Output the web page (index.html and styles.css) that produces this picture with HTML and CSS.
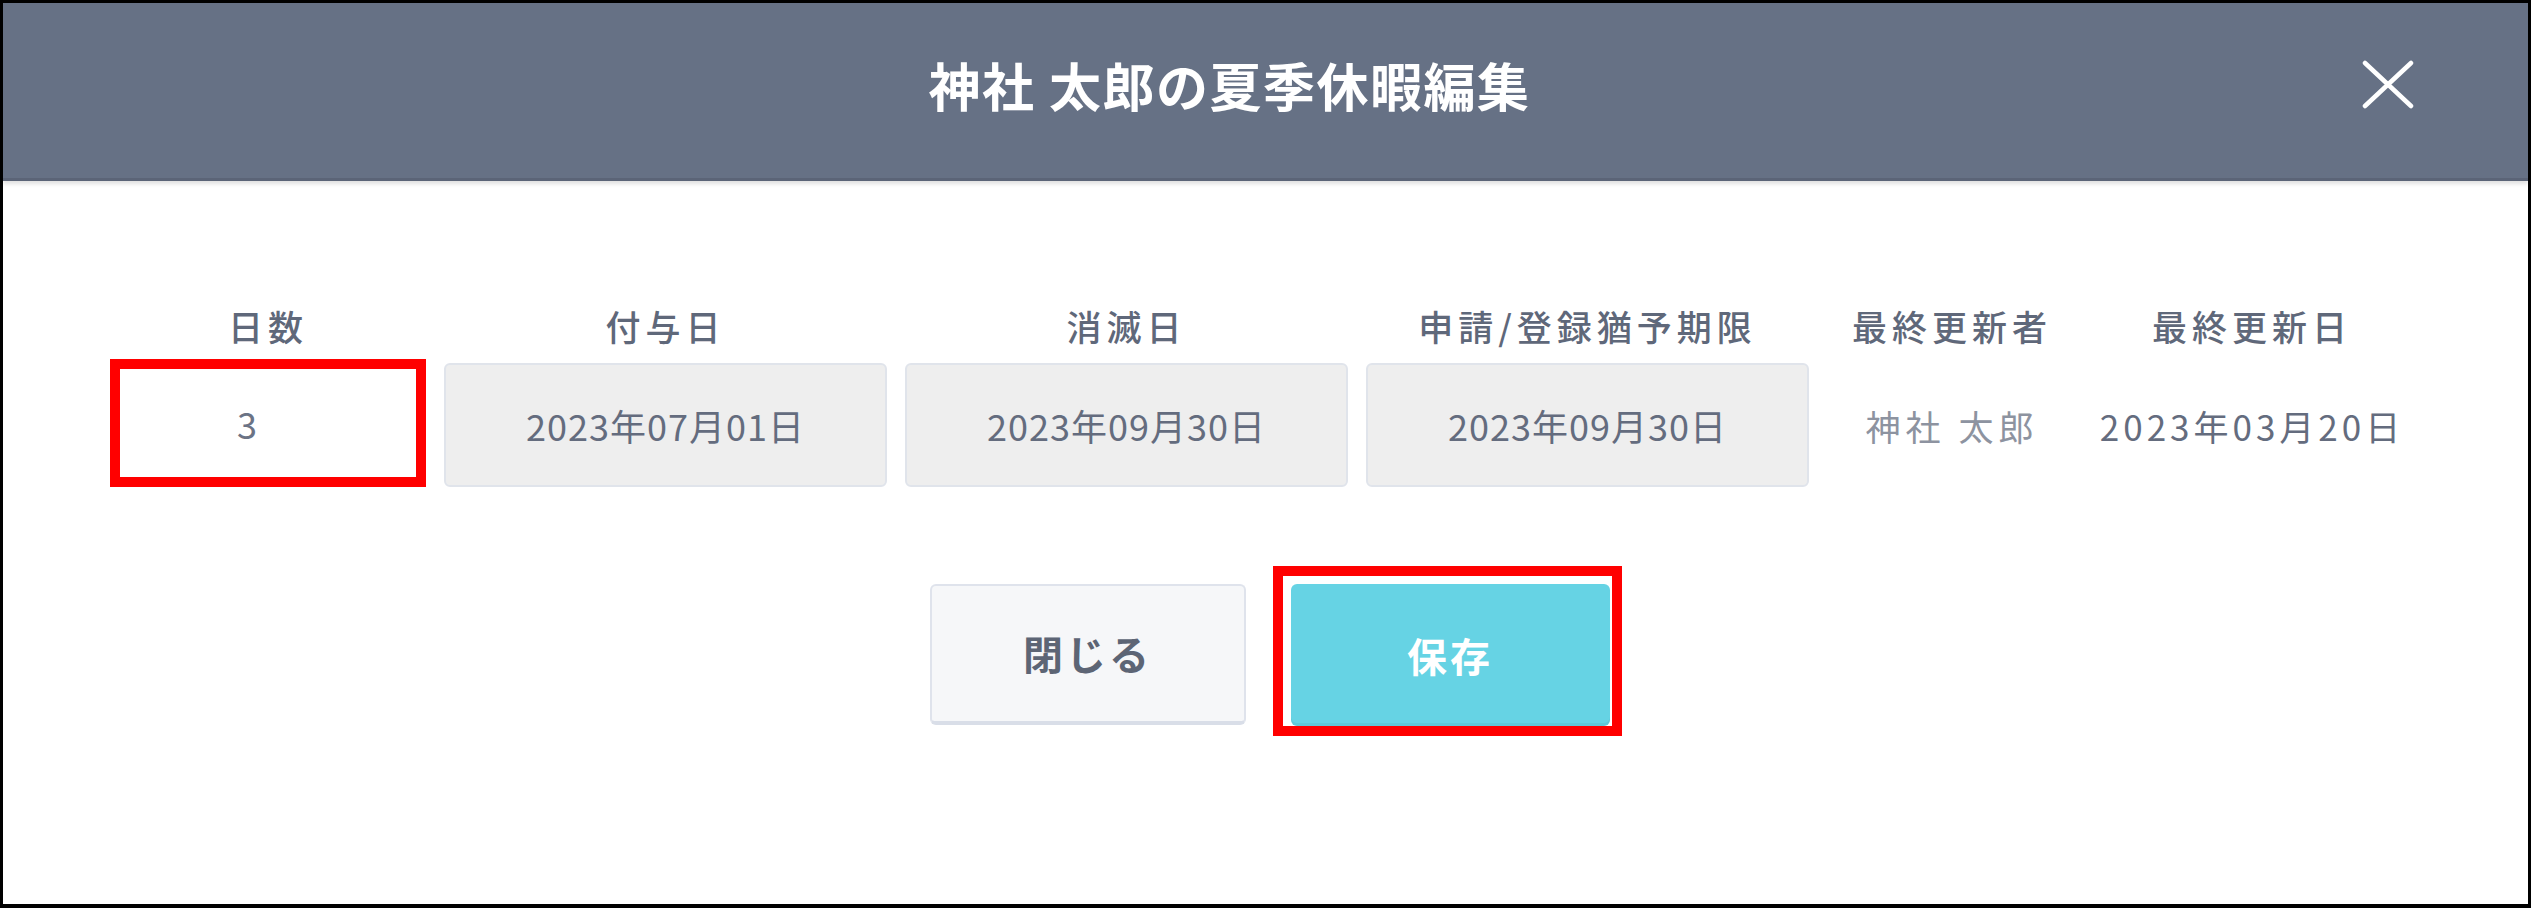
FILE: index.html
```html
<!DOCTYPE html>
<html lang="ja">
<head>
<meta charset="utf-8">
<title>夏季休暇編集</title>
<link rel="stylesheet" href="styles.css">
</head>
<body>
<div class="frame">
  <header class="modal-header">
    <span class="spacer"></span>
    <h1 class="title">神社 太郎の夏季休暇編集</h1>
    <button class="close" aria-label="閉じる">
      <svg width="52" height="49" viewBox="0 0 52 49"><path d="M3 3 L49 46 M49 3 L3 46" stroke="#fff" stroke-width="4.5" stroke-linecap="round" fill="none"/></svg>
    </button>
  </header>
  <main class="modal-body">
    <div class="fields">
      <div class="col col-days">
        <div class="label">日数</div>
        <div class="mark"><div class="input">3</div></div>
      </div>
      <div class="col col-date">
        <div class="label">付与日</div>
        <div class="field">2023年07月01日</div>
      </div>
      <div class="col col-date">
        <div class="label">消滅日</div>
        <div class="field">2023年09月30日</div>
      </div>
      <div class="col col-date">
        <div class="label">申請/登録猶予期限</div>
        <div class="field">2023年09月30日</div>
      </div>
      <div class="col col-user">
        <div class="label">最終更新者</div>
        <div class="plain plain-name">神社 太郎</div>
      </div>
      <div class="col col-updated">
        <div class="label">最終更新日</div>
        <div class="plain">2023年03月20日</div>
      </div>
    </div>
    <div class="actions">
      <button class="btn btn-close">閉じる</button>
      <div class="mark-btn"><button class="btn btn-save">保存</button></div>
    </div>
  </main>
</div>
</body>
</html>
```
FILE: styles.css
```css
html, body {
  margin: 0;
  padding: 0;
  background: #fff;
}
body {
  font-family: "Noto Sans CJK JP", "Noto Sans", sans-serif;
}
.frame {
  width: 2531px;
  height: 908px;
  box-sizing: border-box;
  border: 3px solid #000;
  border-bottom-width: 4px;
  background: #fff;
  overflow: hidden;
}
.modal-header {
  box-sizing: border-box;
  height: 178px;
  background: #667185;
  border-bottom: 3px solid #5b6477;
  box-shadow: 0 3px 4px rgba(0, 0, 0, 0.12);
  display: grid;
  grid-template-columns: 1fr auto 1fr;
  align-items: center;
  padding-bottom: 12px;
}
.title {
  margin: 0 72px 0 0;
  font-size: 52px;
  font-weight: 700;
  line-height: 1;
  color: #fff;
  letter-spacing: 1.5px;
}
.close {
  justify-self: end;
  margin-right: 114px;
  width: 52px;
  height: 49px;
  padding: 0;
  border: 0;
  background: none;
  display: flex;
}
.modal-body {
  padding-top: 125px;
}
.fields {
  display: flex;
  gap: 18px;
  padding-left: 107px;
}
.col {
  display: flex;
  flex-direction: column;
  align-items: stretch;
}
.col-days { width: 316px; }
.col-date { width: 443px; }
.col-user { width: 250px; }
.col-updated { width: 314px; }
.label {
  font-size: 35px;
  font-weight: 500;
  line-height: 40px;
  height: 40px;
  color: #5f687a;
  text-align: center;
  letter-spacing: 5px;
  white-space: nowrap;
}
.mark {
  margin-top: 13px;
  height: 128px;
  box-sizing: border-box;
  border: 10px solid #ff0000;
  display: flex;
}
.input {
  flex: 1;
  background: #fff;
  display: flex;
  align-items: center;
  justify-content: center;
  padding-right: 42px;
  font-size: 36px;
  color: #6b7385;
}
.field {
  margin-top: 17px;
  height: 124px;
  box-sizing: border-box;
  border: 2px solid #e0e4eb;
  border-radius: 6px;
  background: #eeeeee;
  display: flex;
  align-items: center;
  justify-content: center;
  font-size: 36px;
  letter-spacing: 1px;
  color: #646c7e;
}
.plain {
  margin-top: 17px;
  height: 124px;
  display: flex;
  align-items: center;
  justify-content: center;
  font-size: 35px;
  letter-spacing: 4px;
  color: #646c7e;
  white-space: nowrap;
}
.plain-name {
  color: #8d93a0;
  letter-spacing: 5px;
}
.actions {
  margin-top: 79px;
  display: flex;
  justify-content: center;
  align-items: center;
  gap: 27px;
  padding-left: 20px;
}
.btn {
  font-family: inherit;
  font-size: 40px;
  font-weight: 700;
  letter-spacing: 3px;
  border-radius: 6px;
  cursor: pointer;
}
.btn-close {
  margin-top: 6px;
  width: 316px;
  height: 141px;
  box-sizing: border-box;
  background: #f6f7f9;
  border: 2px solid #dfe3ec;
  border-bottom: 4px solid #d9dee8;
  color: #5d6575;
}
.mark-btn {
  border: 10px solid #ff0000;
  padding: 8px 2px 0 8px;
  display: flex;
}
.btn-save {
  width: 319px;
  height: 142px;
  border: 0;
  background: #66d3e4;
  color: #fff;
  box-shadow: inset 0 -3px 0 rgba(0, 0, 0, 0.05);
}
```
